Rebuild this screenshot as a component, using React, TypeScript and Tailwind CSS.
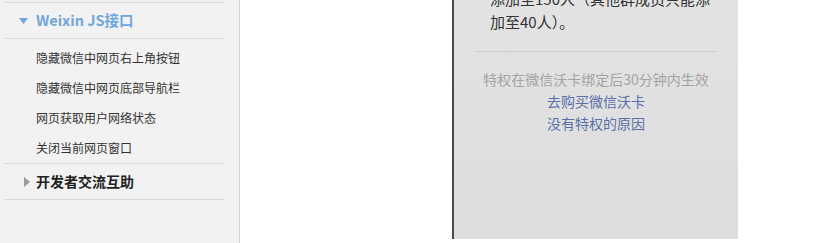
import React from "react";

const cjk = { fontFamily: '"Microsoft YaHei", "Noto Sans CJK SC", "Noto Sans", sans-serif' };

const apiItems = [
  "隐藏微信中网页右上角按钮",
  "隐藏微信中网页底部导航栏",
  "网页获取用户网络状态",
  "关闭当前网页窗口",
];

function Sidebar() {
  return (
    <aside className="w-[240px] h-full shrink-0 bg-[#f2f2f2] border-r border-[#d4d4d4] pt-[2px]" style={cjk}>
      <div className="ml-[4px] w-[220px]">
        <div className="h-[37px] border-t border-b border-[#d9d9d9] flex items-center pl-[15px]">
          <svg width="9" height="6" viewBox="0 0 9 6" className="mr-[8px]">
            <polygon points="0,0 9,0 4.5,6" fill="#6fa6dc" />
          </svg>
          <span className="text-[14.5px] font-bold text-[#6fa6dc] leading-none">Weixin JS接口</span>
        </div>
        <ul className="pt-[4px] border-b border-[#d9d9d9]">
          {apiItems.map((t) => (
            <li key={t} className="h-[30px] flex items-center pl-[32px] text-[12px] text-[#333]">
              {t}
            </li>
          ))}
        </ul>
        <div className="h-[36px] border-b border-[#d9d9d9] flex items-center pl-[20px]">
          <svg width="6" height="10" viewBox="0 0 6 10" className="mr-[6px]">
            <polygon points="0,0 6,5 0,10" fill="#9a9a9a" />
          </svg>
          <span className="text-[14px] font-bold text-[#222]">开发者交流互助</span>
        </div>
      </div>
    </aside>
  );
}

function PhoneShot() {
  return (
    <div className="ml-[212px] w-[286px] h-[239px] overflow-hidden border-l-2 border-[#4a4a4a] bg-gradient-to-b from-[#e3e3e3] to-[#dddddd]" style={cjk}>
      <div className="-mt-[13px] pl-[36px] pr-[20px] text-[15px] leading-[23px] text-[#333]">
        <p>添加至150人（其他群成员只能添</p>
        <p>加至40人）。</p>
      </div>
      <div className="mt-[18px] mx-[22px] h-px bg-[#cdcdcd]" />
      <div className="mt-[16px] flex flex-col items-center text-[14px] leading-[22px]">
        <span className="text-[#a3a3a3]">特权在微信沃卡绑定后30分钟内生效</span>
        <span className="text-[#5a6fa8]">去购买微信沃卡</span>
        <span className="text-[#5a6fa8]">没有特权的原因</span>
      </div>
    </div>
  );
}

export default function App() {
  return (
    <div className="w-[837px] h-[243px] bg-white flex overflow-hidden">
      <Sidebar />
      <PhoneShot />
    </div>
  );
}
